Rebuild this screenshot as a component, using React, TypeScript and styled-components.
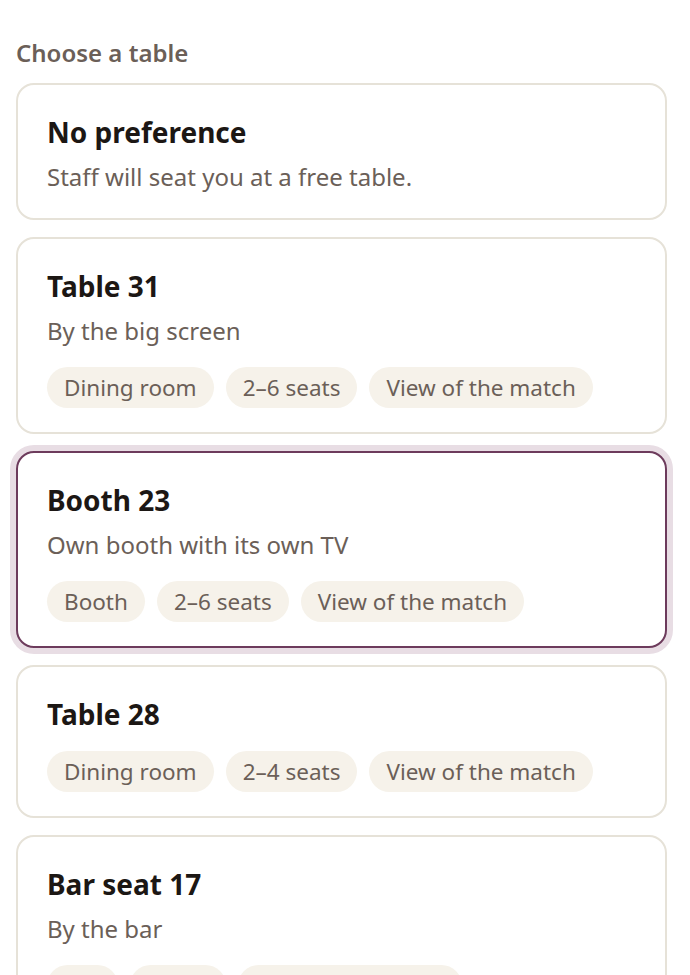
import React from "react";
import styled, { createGlobalStyle } from "styled-components";

const GlobalStyle = createGlobalStyle`
  html, body {
    margin: 0;
    padding: 0;
    background: #ffffff;
    font-family: "Noto Sans", "Open Sans", sans-serif;
  }
`;

const Page = styled.div`
  padding: 35px 23px 0 16px;
  display: flex;
  flex-direction: column;
`;

const Label = styled.h2`
  margin: 0 0 12px 0;
  font-size: 24px;
  line-height: 36px;
  font-weight: 600;
  color: #6b5f58;
`;

const List = styled.div`
  display: flex;
  flex-direction: column;
  gap: 17px;
`;

const Card = styled.div<{ $selected?: boolean }>`
  border-radius: 18px;
  border: ${(p) => (p.$selected ? "2px solid #6d3b5c" : "2px solid #e6e2d8")};
  box-shadow: ${(p) => (p.$selected ? "0 0 0 6px #e8dde4" : "none")};
  background: #ffffff;
  padding: 29px 29px 24px;
  display: flex;
  flex-direction: column;
  cursor: pointer;
`;

const Title = styled.div`
  font-size: 28px;
  line-height: 36px;
  font-weight: 700;
  color: #1c1714;
`;

const Sub = styled.div`
  margin-top: 10px;
  font-size: 24px;
  line-height: 34px;
  color: #6b5f58;
`;

const Chips = styled.div`
  margin-top: 19px;
  display: flex;
  flex-wrap: wrap;
  gap: 12px;
`;

const Chip = styled.span`
  background: #f6f2ea;
  color: #6b5f58;
  font-size: 22.5px;
  line-height: 31px;
  padding: 5px 17px;
  border-radius: 999px;
`;

type Option = {
  title: string;
  sub?: string;
  chips?: string[];
  selected?: boolean;
};

const options: Option[] = [
  { title: "No preference", sub: "Staff will seat you at a free table." },
  { title: "Table 31", sub: "By the big screen", chips: ["Dining room", "2–6 seats", "View of the match"] },
  { title: "Booth 23", sub: "Own booth with its own TV", chips: ["Booth", "2–6 seats", "View of the match"], selected: true },
  { title: "Table 28", chips: ["Dining room", "2–4 seats", "View of the match"] },
  { title: "Bar seat 17", sub: "By the bar", chips: ["Bar", "1 seat", "View of the match"] },
];

export default function App() {
  return (
    <>
      <GlobalStyle />
      <Page>
        <Label>Choose a table</Label>
        <List>
          {options.map((o) => (
            <Card key={o.title} $selected={o.selected}>
              <Title>{o.title}</Title>
              {o.sub && <Sub>{o.sub}</Sub>}
              {o.chips && (
                <Chips>
                  {o.chips.map((c) => (
                    <Chip key={c}>{c}</Chip>
                  ))}
                </Chips>
              )}
            </Card>
          ))}
        </List>
      </Page>
    </>
  );
}
